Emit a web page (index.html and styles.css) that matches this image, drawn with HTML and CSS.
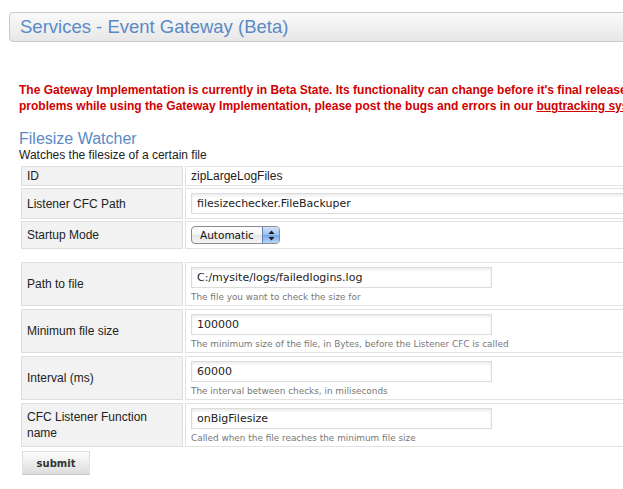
FILE: index.html
```html
<!DOCTYPE html>
<html lang="en">
<head>
<meta charset="utf-8">
<title>Services - Event Gateway (Beta)</title>
<link rel="stylesheet" href="styles.css">
</head>
<body>
<div class="page">
  <div class="titlebar"><h1 class="title">Services - Event Gateway (Beta)</h1></div>
  <div class="content">
    <p class="warning">The Gateway Implementation is currently in Beta State. Its functionality can change before it's final release. If you have any<br>problems while using the Gateway Implementation, please post the bugs and errors in our <a class="warning-link" href="#">bugtracking system</a>.</p>
    <h2 class="section-title">Filesize Watcher</h2>
    <p class="section-desc">Watches the filesize of a certain file</p>
    <table class="form-table">
      <tr>
        <td class="label">ID</td>
        <td class="value">zipLargeLogFiles</td>
      </tr>
      <tr>
        <td class="label">Listener CFC Path</td>
        <td class="value"><input class="text-input text-input--wide" type="text" value="filesizechecker.FileBackuper"></td>
      </tr>
      <tr>
        <td class="label">Startup Mode</td>
        <td class="value">
          <div class="popup">
            <span class="popup-label">Automatic</span>
            <span class="popup-stepper">
              <svg width="7" height="11" viewBox="0 0 7 11"><path d="M3.5 0.5 L6.5 4 L0.5 4 Z" fill="#1a1a1a"/><path d="M0.5 7 L6.5 7 L3.5 10.5 Z" fill="#1a1a1a"/></svg>
            </span>
          </div>
        </td>
      </tr>
    </table>
    <table class="form-table form-table--custom">
      <tr>
        <td class="label">Path to file</td>
        <td class="value"><input class="text-input" type="text" value="C:/mysite/logs/failedlogins.log"><span class="help">The file you want to check the size for</span></td>
      </tr>
      <tr>
        <td class="label">Minimum file size</td>
        <td class="value"><input class="text-input" type="text" value="100000"><span class="help">The minimum size of the file, in Bytes, before the Listener CFC is called</span></td>
      </tr>
      <tr>
        <td class="label">Interval (ms)</td>
        <td class="value"><input class="text-input" type="text" value="60000"><span class="help">The interval between checks, in miliseconds</span></td>
      </tr>
      <tr>
        <td class="label">CFC Listener Function name</td>
        <td class="value"><input class="text-input" type="text" value="onBigFilesize"><span class="help">Called when the file reaches the minimum file size</span></td>
      </tr>
    </table>
    <button class="submit" type="button">submit</button>
  </div>
</div>
</body>
</html>
```
FILE: styles.css
```css
html, body {
  margin: 0;
  padding: 0;
  overflow: hidden;
  background: #fff;
}

body {
  font-family: "Liberation Sans", Arial, sans-serif;
  font-size: 12px;
  color: #222;
}

.page {
  width: 820px;
  padding: 12px 0 0 9px;
}

.titlebar {
  height: 28px;
  border: 1px solid #c9c9c9;
  border-radius: 4px;
  background: linear-gradient(#fafafa, #e7e7e7);
  padding-left: 10px;
}

.title {
  margin: 0;
  font-size: 18.5px;
  font-weight: normal;
  line-height: 28px;
  color: #5a8ac6;
}

.content {
  padding-left: 10px;
}

.warning {
  margin: 40px 0 0;
  font-weight: bold;
  color: #d10000;
  line-height: 16px;
  white-space: nowrap;
}

.warning-link {
  color: #d10000;
  text-decoration: underline;
}

.section-title {
  margin: 15px 0 0;
  font-size: 16px;
  font-weight: normal;
  line-height: 19px;
  color: #5a8ac6;
}

.section-desc {
  margin: 0;
  line-height: 15px;
}

.form-table {
  border-collapse: separate;
  border-spacing: 2px;
  width: 790px;
  margin-top: 1px;
}

.form-table--custom {
  border-spacing: 2px 3px;
  margin-top: 8px;
}

.label {
  width: 150px;
  padding: 1px 5px;
  background: #f2f2f2;
  border: 1px solid #dedede;
  line-height: 16px;
  vertical-align: middle;
}

.value {
  padding: 1px 5px;
  background: #fff;
  border: 1px solid #e2e2e2;
  line-height: 16px;
  vertical-align: middle;
}

.text-input {
  display: block;
  box-sizing: border-box;
  width: 301px;
  height: 21px;
  margin: 3px 0;
  padding: 0 5px;
  border: 1px solid #dcdcdc;
  border-radius: 0;
  background: #fff;
  box-shadow: inset 0 2px 3px rgba(0, 0, 0, 0.08);
  font-family: "DejaVu Sans", sans-serif;
  font-size: 11px;
  color: #222;
  outline: none;
}

.text-input--wide {
  width: 470px;
}

.help {
  display: block;
  font-family: "DejaVu Sans", sans-serif;
  font-size: 8.9px;
  line-height: 13px;
  color: #777;
}

.popup {
  display: flex;
  box-sizing: border-box;
  width: 89px;
  height: 18px;
  margin: 3px 0;
  border: 1px solid #8c8c8c;
  border-radius: 4px;
  overflow: hidden;
  background: linear-gradient(#ffffff, #f4f4f4 50%, #e6e6e6 51%, #f5f5f5);
}

.popup-label {
  flex: 1;
  padding-left: 8px;
  font-family: "DejaVu Sans", sans-serif;
  font-size: 10.5px;
  line-height: 16px;
  color: #111;
}

.popup-stepper {
  display: flex;
  align-items: center;
  justify-content: center;
  width: 16px;
  border-left: 1px solid #5d7fb6;
  background: linear-gradient(#d2e3f8, #9ac0ee 50%, #74a6e8 51%, #b9d6f8);
}

.submit {
  display: block;
  box-sizing: border-box;
  width: 68px;
  height: 24px;
  margin: 1px 0 0 3px;
  padding: 0;
  border: 1px solid #dedede;
  border-bottom-color: #cacaca;
  border-radius: 0;
  background: linear-gradient(#fdfdfd, #dcdcdc);
  font-family: "DejaVu Sans", sans-serif;
  font-size: 10px;
  font-weight: bold;
  color: #333;
}
```
